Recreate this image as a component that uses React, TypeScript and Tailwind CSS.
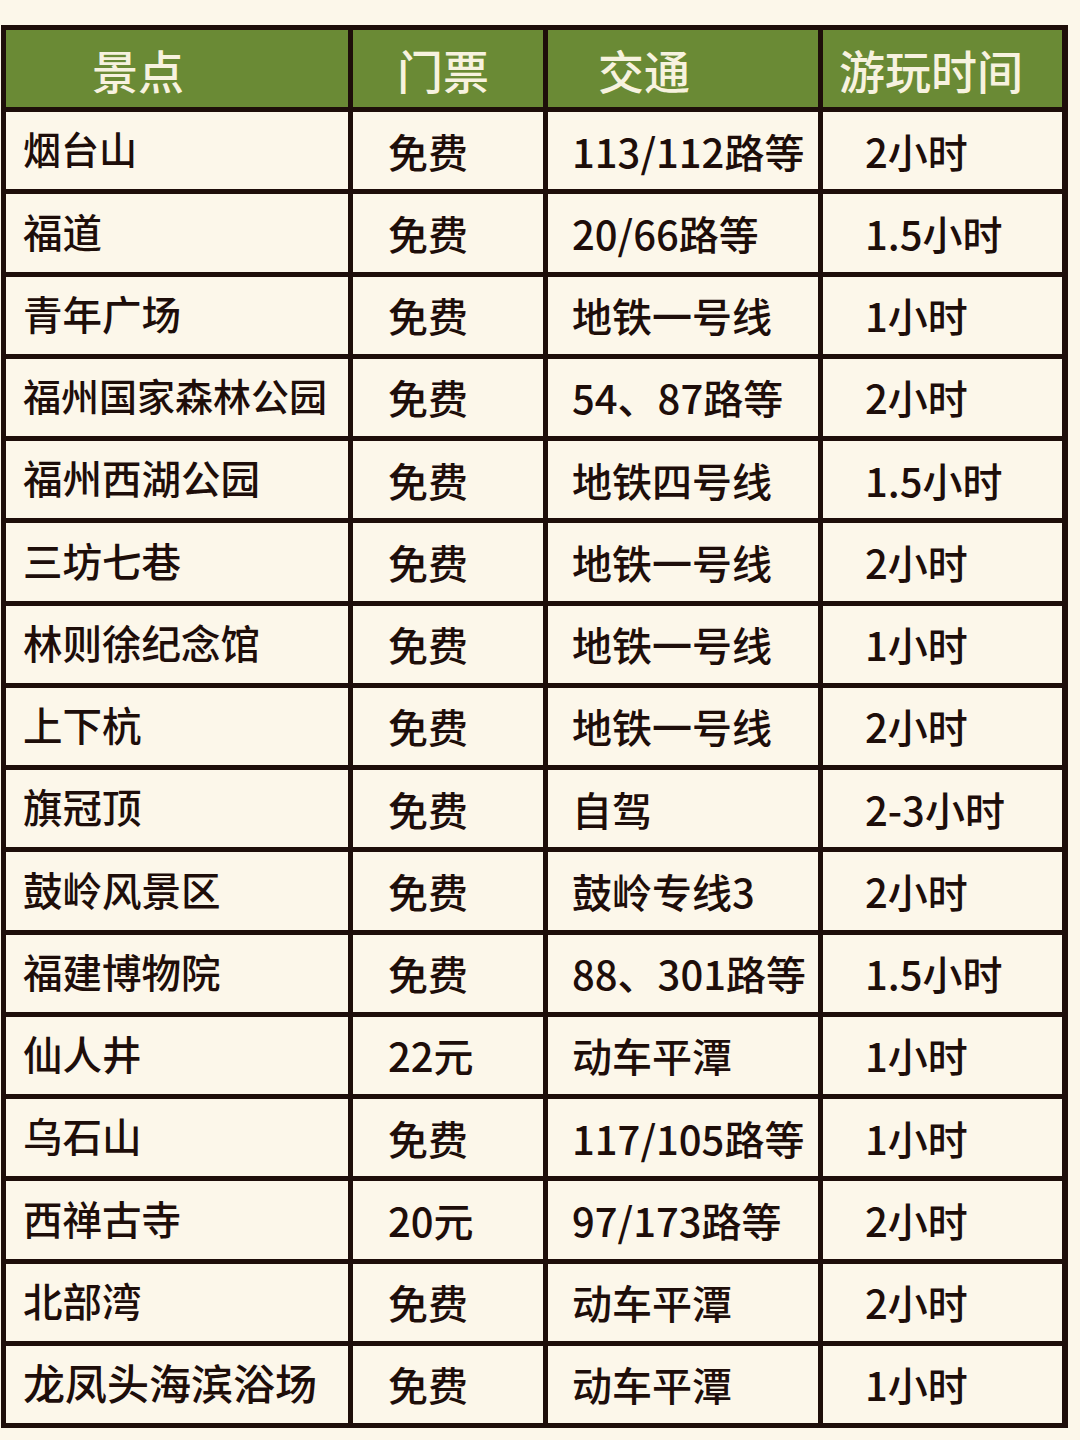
const rows: [string, string, string, string][] = [
  ["烟台山", "免费", "113/112路等", "2小时"],
  ["福道", "免费", "20/66路等", "1.5小时"],
  ["青年广场", "免费", "地铁一号线", "1小时"],
  ["福州国家森林公园", "免费", "54、87路等", "2小时"],
  ["福州西湖公园", "免费", "地铁四号线", "1.5小时"],
  ["三坊七巷", "免费", "地铁一号线", "2小时"],
  ["林则徐纪念馆", "免费", "地铁一号线", "1小时"],
  ["上下杭", "免费", "地铁一号线", "2小时"],
  ["旗冠顶", "免费", "自驾", "2-3小时"],
  ["鼓岭风景区", "免费", "鼓岭专线3", "2小时"],
  ["福建博物院", "免费", "88、301路等", "1.5小时"],
  ["仙人井", "22元", "动车平潭", "1小时"],
  ["乌石山", "免费", "117/105路等", "1小时"],
  ["西禅古寺", "20元", "97/173路等", "2小时"],
  ["北部湾", "免费", "动车平潭", "2小时"],
  ["龙凤头海滨浴场", "免费", "动车平潭", "1小时"],
]

const font = { fontFamily: '"Noto Sans CJK SC", "Noto Sans", sans-serif' }

export default function App() {
  return (
    <div className="w-[1080px] h-[1440px] bg-[#fcf7ea] pt-[25px] overflow-hidden" style={font}>
      <div className="ml-[1px] w-[1067px] h-[1403px] bg-[#1e0e0a] p-[5px] grid grid-cols-[342px_190px_270px_239px] grid-rows-[77px_repeat(16,1fr)] gap-[5px]">
        <div className="bg-[#6a8a35] flex items-center pl-[86px] text-[46px] font-medium text-[#f7f2df] leading-none">景点</div>
        <div className="bg-[#6a8a35] flex items-center pl-[44px] text-[46px] font-medium text-[#f7f2df] leading-none">门票</div>
        <div className="bg-[#6a8a35] flex items-center pl-[50px] text-[46px] font-medium text-[#f7f2df] leading-none">交通</div>
        <div className="bg-[#6a8a35] flex items-center pl-[16px] text-[46px] font-medium text-[#f7f2df] leading-none">游玩时间</div>
        {rows.map((r, i) => (
          <Row key={i} r={r} first={i === 0 || i === 3 ? "text-[38px]" : i === 15 ? "text-[42px]" : "text-[39.5px]"} />
        ))}
      </div>
    </div>
  )
}

function Row({ r, first }: { r: [string, string, string, string]; first: string }) {
  const cell = "bg-[#fcf7ea] flex items-center font-medium text-[#1e0e0a] leading-none whitespace-nowrap"
  return (
    <>
      <div className={cell + " " + first + " pl-[17px] pb-[5px]"}>{r[0]}</div>
      <div className={cell + " text-[40px] pl-[35px]"}>{r[1]}</div>
      <div className={cell + " text-[40px] pl-[24px]"}>{r[2]}</div>
      <div className={cell + " text-[40px] pl-[42px]"}>{r[3]}</div>
    </>
  )
}
